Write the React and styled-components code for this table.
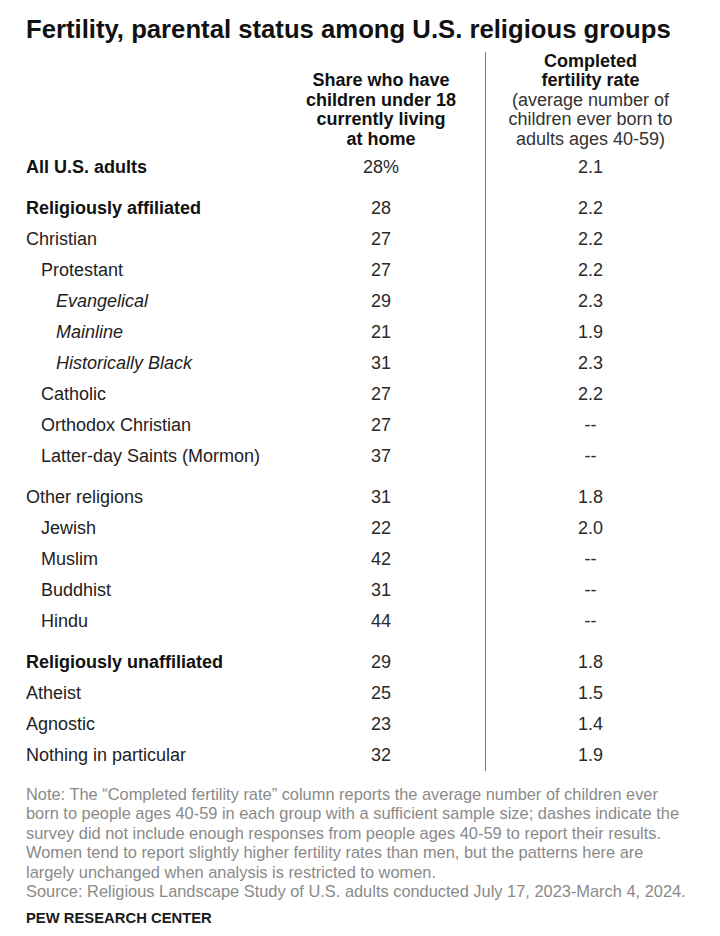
import React from "react";
import styled, { createGlobalStyle } from "styled-components";

const GlobalStyle = createGlobalStyle`
    body { margin:0; background:#fff; }
    * { box-sizing:border-box; }
`;

const Page = styled.div`
    width:720px; height:936px; padding:12px 0 0 26px;
    font-family:"Liberation Sans", Arial, sans-serif;
    color:#222; background:#fff;
`;

const Title = styled.h1`
    margin:0; font-size:25.7px; font-weight:700; line-height:34px; color:#111;
`;

const Table = styled.div`
    margin-top:6px;
`;

const Row = styled.div`
    display:grid; grid-template-columns:251px 208px 210px;
`;

const Cell = styled.div`
    display:flex; align-items:center;
    height:${p => p.$gap ? 41 : 31}px;
    padding-top:${p => p.$gap ? 10 : 0}px;
    font-size:18px;
`;

const Label = styled(Cell)`
    padding-left:${p => p.$indent * 15}px;
    font-weight:${p => p.$bold ? 700 : 400};
    font-style:${p => p.$italic ? "italic" : "normal"};
    color:${p => p.$bold ? "#111" : "#222"};
`;

const Value = styled(Cell)`
    justify-content:center;
    border-left:${p => p.$divider ? "1.5px solid #7a7a7a" : "none"};
    color:#2a2a2a;
`;

const HeadCell = styled.div`
    display:flex; flex-direction:column; justify-content:flex-end; align-items:center;
    height:100px; padding-bottom:3px; text-align:center;
    font-size:18px; line-height:19.4px; white-space:nowrap;
    border-left:${p => p.$divider ? "1.5px solid #7a7a7a" : "none"};
`;

const HeadBold = styled.span`
    font-weight:700; color:#111;
`;

const HeadPlain = styled.span`
    color:#333;
`;

const Note = styled.div`
    margin-top:14px; font-size:16.4px; line-height:19.4px; color:#8a8a8a;
`;

const NoteLine = styled.div`
    white-space:nowrap;
`;

const Brand = styled.div`
    margin-top:7px; font-size:14.8px; line-height:20px; font-weight:700; color:#1a1a1a;
`;

const rows = [
    { label: "All U.S. adults", bold: true, a: "28%", b: "2.1" },
    { label: "Religiously affiliated", bold: true, gap: true, a: "28", b: "2.2" },
    { label: "Christian", a: "27", b: "2.2" },
    { label: "Protestant", indent: 1, a: "27", b: "2.2" },
    { label: "Evangelical", indent: 2, italic: true, a: "29", b: "2.3" },
    { label: "Mainline", indent: 2, italic: true, a: "21", b: "1.9" },
    { label: "Historically Black", indent: 2, italic: true, a: "31", b: "2.3" },
    { label: "Catholic", indent: 1, a: "27", b: "2.2" },
    { label: "Orthodox Christian", indent: 1, a: "27", b: "--" },
    { label: "Latter-day Saints (Mormon)", indent: 1, a: "37", b: "--" },
    { label: "Other religions", gap: true, a: "31", b: "1.8" },
    { label: "Jewish", indent: 1, a: "22", b: "2.0" },
    { label: "Muslim", indent: 1, a: "42", b: "--" },
    { label: "Buddhist", indent: 1, a: "31", b: "--" },
    { label: "Hindu", indent: 1, a: "44", b: "--" },
    { label: "Religiously unaffiliated", bold: true, gap: true, a: "29", b: "1.8" },
    { label: "Atheist", a: "25", b: "1.5" },
    { label: "Agnostic", a: "23", b: "1.4" },
    { label: "Nothing in particular", a: "32", b: "1.9" },
];

const noteLines = [
    "Note: The “Completed fertility rate” column reports the average number of children ever",
    "born to people ages 40-59 in each group with a sufficient sample size; dashes indicate the",
    "survey did not include enough responses from people ages 40-59 to report their results.",
    "Women tend to report slightly higher fertility rates than men, but the patterns here are",
    "largely unchanged when analysis is restricted to women.",
    "Source: Religious Landscape Study of U.S. adults conducted July 17, 2023-March 4, 2024.",
];

export default function App() {
    return (
        <>
            <GlobalStyle />
            <Page>
                <Title>Fertility, parental status among U.S. religious groups</Title>
                <Table>
                    <Row>
                        <HeadCell />
                        <HeadCell>
                            <HeadBold>Share who have</HeadBold>
                            <HeadBold>children under 18</HeadBold>
                            <HeadBold>currently living</HeadBold>
                            <HeadBold>at home</HeadBold>
                        </HeadCell>
                        <HeadCell $divider>
                            <HeadBold>Completed</HeadBold>
                            <HeadBold>fertility rate</HeadBold>
                            <HeadPlain>(average number of</HeadPlain>
                            <HeadPlain>children ever born to</HeadPlain>
                            <HeadPlain>adults ages 40-59)</HeadPlain>
                        </HeadCell>
                    </Row>
                    {rows.map(r => (
                        <Row key={r.label}>
                            <Label $gap={r.gap} $indent={r.indent || 0} $bold={r.bold} $italic={r.italic}>{r.label}</Label>
                            <Value $gap={r.gap}>{r.a}</Value>
                            <Value $gap={r.gap} $divider>{r.b}</Value>
                        </Row>
                    ))}
                </Table>
                <Note>
                    {noteLines.map(l => <NoteLine key={l}>{l}</NoteLine>)}
                </Note>
                <Brand>PEW RESEARCH CENTER</Brand>
            </Page>
        </>
    );
}
